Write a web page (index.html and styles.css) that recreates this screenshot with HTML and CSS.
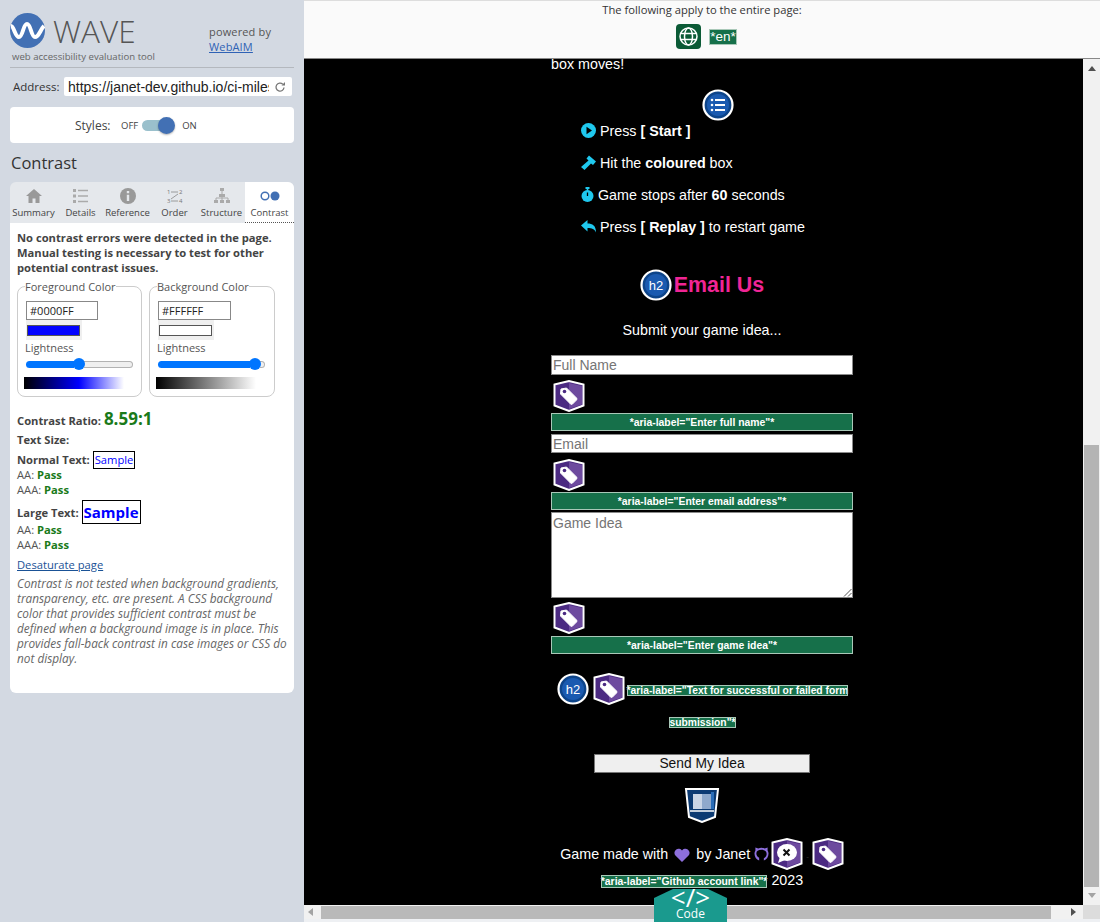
FILE: index.html
```html
<!DOCTYPE html>
<html lang="en">
<head>
  <meta charset="UTF-8">
  <title>WAVE Report</title>
  <link rel="stylesheet" href="styles.css">
</head>
<body>
  <svg class="defs" width="0" height="0">
    <symbol id="shield" viewBox="0 0 32 32">
      <path d="M1.500 4.500 16 1l14.500 3.500v21L16 31 1.500 25.500z" fill="#4b2a82" stroke="#fff" stroke-width="2"/>
      <path d="M16 3l13 3v18.500L16 29z" fill="#6d4a9e"/>
    </symbol>
    <symbol id="tag" viewBox="0 0 32 32">
      <use href="#shield"/>
      <path d="M8 9 13.500 8l10 10q1 1 0 2l-4 4q-1 1-2 0l-10-10z" fill="#fff" stroke="#fff" stroke-linejoin="round"/>
      <circle cx="11.500" cy="11.500" r="1.800" fill="#4b2a82"/>
    </symbol>
    <symbol id="h2" viewBox="0 0 32 32">
      <circle cx="16" cy="16" r="14.500" fill="#0d4489" stroke="#fff" stroke-width="2.200"/>
      <circle cx="16" cy="16" r="11" fill="#1a5ab0"/>
    </symbol>
  </svg>

  <aside class="sidebar">
    <div class="brand">
      <div class="logo-block">
        <div class="logo-row">
          <svg class="logo" width="35" height="35" viewBox="0 0 35 35">
            <circle cx="17.500" cy="17.500" r="17.500" fill="#4270b4"/>
            <path d="M1 13c3 0 4 11 8 11s4-13 8-13 4 13 8 13 5-7 9-11" fill="none" stroke="#fff" stroke-width="4"/>
          </svg>
          <span class="wordmark">WAVE</span>
        </div>
        <div class="tagline">web accessibility evaluation tool</div>
      </div>
      <div class="powered">powered by<br><a href="#">WebAIM</a></div>
    </div>

    <div class="address">
      <label>Address:</label>
      <div class="url">
        <span class="url-text">https://janet-dev.github.io/ci-milestone2</span>
        <svg width="12" height="12" viewBox="0 0 12 12"><path d="M10 6.500A4 4 0 1 1 8.800 3.200" fill="none" stroke="#777" stroke-width="1.300"/><path d="M7.500 4.500h3.500V1z" fill="#777"/></svg>
      </div>
    </div>

    <div class="styles-card">
      <span class="styles-label">Styles:</span>
      <span class="small">OFF</span>
      <span class="toggle"><span class="knob"></span></span>
      <span class="small">ON</span>
    </div>

    <h2 class="panel-title">Contrast</h2>

    <div class="tabs">
      <div class="tab">
        <svg width="18" height="16" viewBox="0 0 18 16"><path d="M9 1 1 8h2.500v7h4v-4.500h3V15h4V8H17z" fill="#999"/></svg>
        <span>Summary</span>
      </div>
      <div class="tab">
        <svg width="16" height="16" viewBox="0 0 16 16"><path d="M5 2.500h10M5 8h10M5 13.500h10" stroke="#aaa" stroke-width="1.500"/><path d="M0 1h3v3H0zM0 6.500h3v3H0zM0 12h3v3H0z" fill="#aaa"/></svg>
        <span>Details</span>
      </div>
      <div class="tab">
        <svg width="16" height="16" viewBox="0 0 16 16"><circle cx="8" cy="8" r="8" fill="#999"/><path d="M6.800 3h2.400v2.300H6.800zM6.800 6.800h2.400V13H6.800z" fill="#e5e8ec"/></svg>
        <span>Reference</span>
      </div>
      <div class="tab">
        <svg width="16" height="16" viewBox="0 0 16 16" class="order-icon"><text x="0" y="6" font-size="6">1</text><text x="12" y="6" font-size="6">2</text><text x="0" y="15" font-size="6">3</text><text x="12" y="15" font-size="6">4</text><path d="M4 4h7M11 6 4 11M4 13h7" stroke="#888" fill="none" stroke-width=".8"/></svg>
        <span>Order</span>
      </div>
      <div class="tab">
        <svg width="18" height="16" viewBox="0 0 18 16"><path d="M7 0h4v3H7zM6 6h6v3H6zM1 12h4v3H1zM7 12h4v3H7zM13 12h4v3h-4z" fill="#aaa"/><path d="M9 3v9M3 12v-2h12v2" fill="none" stroke="#aaa"/></svg>
        <span>Structure</span>
      </div>
      <div class="tab active">
        <svg width="20" height="16" viewBox="0 0 20 16"><circle cx="5" cy="8" r="3.800" fill="none" stroke="#4270b4" stroke-width="1.500"/><circle cx="15" cy="8" r="4.500" fill="#4270b4"/></svg>
        <span>Contrast</span>
      </div>
    </div>

    <div class="panel">
      <p class="lead">No contrast errors were detected in the page. Manual testing is necessary to test for other potential contrast issues.</p>

      <div class="pickers">
        <fieldset class="picker">
          <legend>Foreground Color</legend>
          <div class="hex">#0000FF</div>
          <div class="swatch"><span class="chip chip-blue"></span></div>
          <div class="light-label">Lightness</div>
          <div class="slider"><span class="fill fill-half"></span><span class="thumb"></span><span class="rest"></span></div>
          <div class="ramp ramp-blue"></div>
        </fieldset>
        <fieldset class="picker">
          <legend>Background Color</legend>
          <div class="hex">#FFFFFF</div>
          <div class="swatch"><span class="chip"></span></div>
          <div class="light-label">Lightness</div>
          <div class="slider"><span class="fill fill-full"></span><span class="thumb"></span><span class="rest"></span></div>
          <div class="ramp ramp-grey"></div>
        </fieldset>
      </div>

      <p class="ratio"><b>Contrast Ratio:</b> <span class="ratio-num">8.59:1</span></p>
      <p class="size-head"><b>Text Size:</b></p>
      <p class="normal-row"><b>Normal Text:</b> <span class="sample">Sample</span></p>
      <p class="result">AA: <b>Pass</b></p>
      <p class="result">AAA: <b>Pass</b></p>
      <p class="large-row"><b>Large Text:</b> <span class="sample sample-lg">Sample</span></p>
      <p class="result">AA: <b>Pass</b></p>
      <p class="result">AAA: <b>Pass</b></p>
      <p class="desat"><a href="#">Desaturate page</a></p>
      <p class="note">Contrast is not tested when background gradients, transparency, etc. are present. A CSS background color that provides sufficient contrast must be defined when a background image is in place. This provides fall-back contrast in case images or CSS do not display.</p>
    </div>
  </aside>

  <main class="report">
    <div class="topbar">
      <div class="topbar-text">The following apply to the entire page:</div>
      <div class="topbar-items">
        <span class="globe">
          <svg width="19" height="19" viewBox="0 0 19 19" fill="none" stroke="#fff" stroke-width="1.500"><circle cx="9.500" cy="9.500" r="8.500"/><ellipse cx="9.500" cy="9.500" rx="4" ry="8.500"/><path d="M1.500 6.500h16M1.500 12.500h16"/></svg>
        </span>
        <span class="mark mark-en">*en*</span>
      </div>
    </div>

    <div class="viewport">
      <div class="page">
        <p class="intro">box moves!</p>
        <div class="list-icon">
          <svg width="32" height="32" viewBox="0 0 32 32"><use href="#h2"/><path d="M13 11h10M13 16h10M13 21h10" stroke="#fff" stroke-width="2"/><circle cx="10" cy="11" r="1.300" fill="#fff"/><circle cx="10" cy="16" r="1.300" fill="#fff"/><circle cx="10" cy="21" r="1.300" fill="#fff"/></svg>
        </div>
        <ul class="steps">
          <li>
            <svg width="15" height="15" viewBox="0 0 15 15"><circle cx="7.500" cy="7.500" r="7.500" fill="#1fc8ee"/><path d="M5.500 3.800 11 7.500l-5.500 3.700z" fill="#000"/></svg>
            Press <b>[ Start ]</b>
          </li>
          <li>
            <svg width="15" height="15" viewBox="0 0 15 15"><path d="M8 .5 15 6.500 12 10 10 8.500 3.500 15 0 12 7.500 5.500 5.500 3.500z" fill="#1fc8ee"/></svg>
            Hit the <b>coloured</b> box
          </li>
          <li>
            <svg width="13" height="15" viewBox="0 0 13 15"><circle cx="6.500" cy="9" r="6" fill="#1fc8ee"/><path d="M4.500 0h4v2h-4zM5.700 2h1.600v2H5.700z" fill="#1fc8ee"/><path d="M6.500 5.500V9" stroke="#000" stroke-width="1.300"/></svg>
            Game stops after <b>60</b> seconds
          </li>
          <li>
            <svg width="15" height="15" viewBox="0 0 15 15"><path d="M6.500 1v3.500c5 0 8.500 2 8.500 9-1.500-3.500-4-4.500-8.500-4.500v3.500L0 6.500z" fill="#1fc8ee"/></svg>
            Press <b>[ Replay ]</b> to restart game
          </li>
        </ul>

        <h2 class="email-head">
          <svg width="32" height="32" viewBox="0 0 32 32"><use href="#h2"/><text x="16" y="21" class="h2-text">h2</text></svg>
          <span>Email Us</span>
        </h2>
        <p class="submit">Submit your game idea...</p>

        <form class="idea-form">
          <div class="field field-name">Full Name</div>
          <svg class="tag tag-a" width="32" height="32"><use href="#tag"/></svg>
          <div class="mark-bar">*aria-label="Enter full name"*</div>
          <div class="field field-email">Email</div>
          <svg class="tag tag-b" width="32" height="32"><use href="#tag"/></svg>
          <div class="mark-bar">*aria-label="Enter email address"*</div>
          <div class="field field-area">Game Idea
            <svg class="grip" width="9" height="9" viewBox="0 0 9 9"><path d="M8.500 1 1 8.500M8.500 5 5 8.500" stroke="#555"/></svg>
          </div>
          <svg class="tag tag-c" width="32" height="32"><use href="#tag"/></svg>
          <div class="mark-bar mark-bar-last">*aria-label="Enter game idea"*</div>

          <p class="status">
            <svg width="32" height="32" viewBox="0 0 32 32"><use href="#h2"/><text x="16" y="21" class="h2-text">h2</text></svg>
            <svg class="status-tag" width="32" height="32"><use href="#tag"/></svg>
            <span class="mark">*aria-label="Text for successful or failed form submission"*</span>
          </p>

          <div class="send">Send My Idea</div>

          <div class="shield-row">
            <svg width="36" height="36" viewBox="0 0 36 36">
              <path d="M2 2h32l-3 28-13 5-13-5z" fill="#0b3a73" stroke="#fff" stroke-width="2"/>
              <path d="M9 7h18v15H9z" fill="#c9d5e6"/><path d="M18 7h9v15h-9z" fill="#8fa9cc"/><path d="M6 24h24" stroke="#fff" stroke-width="1.500"/>
              <path d="M27 5h3v17h-3z" fill="#2a6db8"/>
            </svg>
          </div>
        </form>

        <footer class="credits">
          <div class="credit-line">Game made with
            <svg class="heart" width="16" height="14" viewBox="0 0 16 14"><path d="M8 14 1.200 7.200A4 4 0 0 1 8 2.500a4 4 0 0 1 6.800 4.700z" fill="#8d6fdc"/></svg>
            by Janet
            <svg class="octo" width="15" height="15" viewBox="0 0 16 16"><path d="M5.500 15.500C2.500 14.500.5 11.500.5 8c0-1.300.4-2.400 1-3.300V1.500l3 1.200a9 9 0 0 1 7 0l3-1.200v3.200c.6.900 1 2 1 3.300 0 3.500-2 6.500-5 7.500v-2.500c1.800-.6 3-2.500 3-4.500 0-2.700-2-4.500-5.500-4.500S2.500 5.300 2.500 8c0 2 1.200 3.900 3 4.500z" fill="#8d6fdc"/></svg>
            <svg class="bubble" width="32" height="32" viewBox="0 0 32 32"><use href="#shield"/><ellipse cx="16" cy="14.500" rx="10" ry="8.500" fill="#fff"/><path d="M9 19l-2 6 7-3z" fill="#fff"/><path d="M12.500 11.500l6 6M18.500 11.500l-6 6" stroke="#111" stroke-width="2"/></svg>
            <span class="dash">-</span>
            <svg class="label-tag" width="32" height="32"><use href="#tag"/></svg>
          </div>
          <div class="credit-line2"><span class="mark mark-foot">*aria-label="Github account link"*</span> 2023</div>
        </footer>
      </div>
      <div class="vbar">
        <span class="arrow-up"></span>
        <span class="vthumb"></span>
        <span class="arrow-down"></span>
      </div>
    </div>

    <div class="hbar">
      <span class="arrow-left"></span>
      <span class="hthumb"></span>
      <span class="arrow-right"></span>
      <span class="corner"></span>
    </div>
    <div class="bottom-line"></div>

    <div class="code-tab">
      <span class="code-glyph">&lt;/&gt;</span>
      <span class="code-label">Code</span>
    </div>
  </main>
</body>
</html>
```

FILE: styles.css
```css
* { box-sizing: border-box; }
html, body { margin: 0; height: 100%; }
body {
  width: 1100px; height: 922px; overflow: hidden;
  display: flex;
  font-family: "Open Sans", sans-serif;
  background: #d3d9e2;
  color: #444;
}
p { margin: 0; }
.defs { position: absolute; }

/* sidebar */
.sidebar { width: 304px; flex: none; padding: 13px 10px 0; }
.brand { display: flex; height: 55px; border-bottom: 1px solid #b4b8be; }
.logo-block { width: 199px; }
.logo-row { display: flex; align-items: center; height: 35px; }
.logo { flex: none; }
.wordmark { font-size: 31.500px; font-weight: 300; color: #555; margin-left: 8px; line-height: 35px; }
.tagline { font-size: 9.600px; color: #666; margin: 2px 0 0 2px; line-height: 14px; white-space: nowrap; }
.powered { font-size: 11px; line-height: 15px; color: #555; padding-top: 11px; letter-spacing: .15px; }
.powered a { color: #2f62b5; }

.address { display: flex; align-items: center; height: 19px; margin-top: 9px; }
.address label { font-size: 11.500px; color: #333; width: 54px; padding-left: 3px; flex: none; white-space: nowrap; }
.url { width: 228px; height: 19px; background: #fff; border-radius: 2px; display: flex; align-items: center; padding: 0 6px 0 4px; }
.url-text { width: 201px; overflow: hidden; white-space: nowrap; font: 14px "Liberation Sans", sans-serif; color: #222; }
.url svg { margin-left: 5px; flex: none; }

.styles-card { height: 36px; margin-top: 11px; background: #fff; border-radius: 4px; display: flex; align-items: center; padding-left: 65px; }
.styles-label { font-size: 12px; color: #444; width: 46px; }
.small { font-size: 9.500px; color: #444; }
.toggle { width: 32px; height: 11px; margin: 0 8px 0 4px; border-radius: 6px; background: #9ac0cc; position: relative; }
.knob { position: absolute; right: -1px; top: -3px; width: 17px; height: 17px; border-radius: 50%; background: #4270b4; box-shadow: 0 1px 2px rgba(0,0,0,.3); }

.panel-title { font-size: 16.500px; font-weight: 400; color: #333; margin: 9px 0 0 1px; line-height: 22px; height: 30px; }

.tabs { display: flex; height: 41px; background: #e5e8ec; border-radius: 6px 6px 0 0; overflow: hidden; }
.tab { display: flex; flex-direction: column; align-items: center; justify-content: flex-start; padding-top: 6px; width: 47px; font-size: 9.500px; color: #444; white-space: nowrap; }
.tab svg { height: 16px; margin-bottom: 2px; flex: none; }
.tab span { line-height: 14px; }
.tab.active { background: #fff; width: 49px; border-bottom: 1px dotted #555; }
.order-icon text { fill: #777; font-family: "Open Sans", sans-serif; }

.panel { height: 470px; background: #fff; border-radius: 0 0 6px 6px; padding: 7px 7px 0; font-size: 11.200px; line-height: 15px; color: #555; }
.lead { font-weight: 700; color: #444; width: 262px; }
.pickers { display: flex; gap: 7px; margin-top: 6px; }
.picker { width: 125px; height: 116px; margin: 0; padding: 0; border: 1px solid #ccc; border-radius: 8px; position: relative; }
.picker + .picker { width: 126px; }
.picker legend { padding: 0; margin-left: 7px; font-size: 11px; line-height: 11px; color: #555; white-space: nowrap; }
.hex { width: 72px; height: 19px; margin: 9px 0 0 8px; border: 1px solid #888; font-size: 11px; line-height: 17px; padding-left: 3px; color: #222; }
.picker + .picker .hex { width: 73px; }
.swatch { width: 56px; height: 20px; margin-left: 8px; background: #efefef; padding: 5px 2px 4px 1px; }
.chip { display: block; height: 11px; border: 1px solid #555; background: #fff; }
.chip-blue { background: #0000ff; }
.light-label { margin: 0 0 0 7px; line-height: 15px; font-size: 11px; color: #555; }
.slider { display: flex; align-items: center; height: 14px; margin: 2px 0 0 8px; width: 107px; }
.fill { height: 7px; background: #0075ff; border-radius: 4px 0 0 4px; flex: none; }
.fill-half { width: 48px; }
.fill-full { width: 92px; }
.thumb { width: 12px; height: 12px; border-radius: 50%; background: #0075ff; margin: 0 -1px; flex: none; position: relative; }
.rest { flex: 1; height: 7px; background: #efefef; border: 1px solid #b2b2b2; border-left: 0; border-radius: 0 4px 4px 0; }
.ramp { width: 100px; height: 12px; margin: 6px 0 0 6px; }
.ramp-blue { background: linear-gradient(90deg, #000 0, #0000ff 55%, #fff 100%); }
.ramp-grey { background: linear-gradient(90deg, #000, #fff); }

.ratio { margin-top: 11px; line-height: 22px; color: #444; }
.ratio-num { font-size: 17px; font-weight: 700; color: #1a7a1a; }
.size-head { margin-top: 0; line-height: 15px; color: #444; }
.normal-row { margin-top: 3px; line-height: 19px; height: 17px; color: #444; }
.sample { display: inline-block; height: 18px; line-height: 16px; padding: 0 1px; border: 1px solid #000; color: #0000ff; background: #fff; }
.result { line-height: 15px; }
.result b { color: #1a7a1a; }
.large-row { margin-top: 3px; height: 25px; line-height: 25px; color: #444; }
.sample-lg { height: 24px; line-height: 22px; font-size: 15px; font-weight: 700; vertical-align: top; padding: 0 1px; }
.large-row + .result { margin-top: -3px; }
.desat { margin-top: 5px; line-height: 15px; }
.desat a { color: #1a5296; }
.note { margin-top: 4px; font-size: 11.800px; font-style: italic; color: #666; width: 272px; }

/* report side */
.report { flex: 1; position: relative; display: flex; flex-direction: column; background: #000; }
.topbar { height: 59px; flex: none; background: #fafafa; border-top: 1px solid #ddd; border-bottom: 1px solid #888; text-align: center; }
.topbar-text { font-size: 11.200px; line-height: 15px; color: #333; padding-top: 1px; }
.topbar-items { display: flex; justify-content: center; align-items: center; gap: 8px; margin-top: 7px; padding-left: 9px; }
.globe { width: 25px; height: 25px; background: #0b5a36; border-radius: 4px; display: flex; align-items: center; justify-content: center; }
.mark { background: #16704a; color: #fff; font: 700 10.400px "Liberation Sans", sans-serif; outline: 1px solid #a9c8b8; outline-offset: -1px; }
.mark-en { font: 400 13.500px "Liberation Sans", sans-serif; padding: 0 1px; line-height: 16px; }

.viewport { flex: 1; display: flex; min-height: 0; }
.page { flex: 1; overflow: hidden; padding-left: 247px; color: #fff; font: 14.300px "Liberation Sans", sans-serif; background: #000; }
.intro { line-height: 10px; }
.list-icon { width: 302px; height: 32px; margin-top: 20px; text-align: center; padding-left: 32px; }
.steps { list-style: none; margin: -1px 0 0; padding: 0 0 0 30px; }
.steps li { height: 22px; line-height: 22px; margin-bottom: 10px; white-space: nowrap; }
.steps svg { vertical-align: -2px; }

.email-head { display: flex; width: 302px; height: 32px; margin: 31px 0 0; justify-content: center; align-items: center; gap: 2px; font-size: 21.400px; color: #f02595; }
.h2-text { font: 13px "Liberation Sans", sans-serif; fill: #fff; text-anchor: middle; }
.submit { width: 302px; text-align: center; line-height: 20px; margin-top: 19px; }

.idea-form { width: 302px; margin-top: 15px; }
.field { background: #fff; border: 1px solid #8a8a8a; color: #757575; padding-left: 1px; height: 20px; line-height: 18px; font-size: 14px; }
.field-email { height: 19px; margin-top: 3px; line-height: 18px; }
.field-area { height: 86px; margin-top: 2px; position: relative; line-height: 20px; }
.grip { position: absolute; right: 0; bottom: 0; }
.tag { display: block; margin-left: 2px; }
.tag-a { margin-top: 5px; }
.tag-b { margin-top: 6px; }
.tag-c { margin-top: 4px; }
.mark-bar { height: 18px; line-height: 17px; margin-top: 1px; background: #16704a; border: 1px solid #a9c8b8; color: #fff; font-size: 10.400px; font-weight: 700; text-align: center; }
.mark-bar-last { margin-top: 2px; }
.status { margin-top: 19px; height: 65px; line-height: 32px; text-align: center; padding-left: 1px; }
.status svg { vertical-align: top; }
.status-tag { margin-right: -2px; }
.status .mark { font-size: 10.300px; }
.send { width: 216px; height: 19px; margin: 16px 0 0 43px; background: #efefef; border: 1px solid #767676; color: #111; text-align: center; line-height: 17px; font-size: 13.800px; }
.shield-row { height: 36px; margin-top: 14px; text-align: center; }

.credits { width: 302px; text-align: center; }
.credit-line { height: 31px; line-height: 31px; margin-top: 16px; white-space: nowrap; }
.credit-line svg { vertical-align: middle; }
.heart { margin: 0 2px; }
.octo { margin: 0 -2px 3px 0; }
.bubble { margin-top: -2px; }
.label-tag { margin-top: -2px; }
.dash { color: #333; font-size: 8px; margin: 0 -1px; }
.credit-line2 { line-height: 20px; white-space: nowrap; }
.mark-foot { padding: 1px 0; }

/* scrollbars */
.vbar { width: 17px; flex: none; background: #f1f1f1; position: relative; display: flex; flex-direction: column; align-items: center; }
.vthumb { width: 15px; height: 442px; background: #b4b4b4; margin-top: 374px; }
.arrow-up { width: 0; height: 0; border: 4px solid transparent; border-top: 0; border-bottom: 5px solid #505050; margin-top: 7px; }
.arrow-down { width: 0; height: 0; border: 4px solid transparent; border-bottom: 0; border-top: 5px solid #a3a3a3; margin-top: 6px; }
.hbar { height: 14px; flex: none; background: #f1f1f1; display: flex; align-items: center; }
.arrow-left { width: 0; height: 0; border: 4px solid transparent; border-left: 0; border-right: 5px solid #a3a3a3; margin-left: 4px; }
.hthumb { width: 730px; height: 13px; margin-left: 8px; background: #b9b9b9; }
.arrow-right { width: 0; height: 0; border: 4px solid transparent; border-right: 0; border-left: 5px solid #505050; margin-left: 20px; }
.corner { width: 17px; height: 14px; background: #dcdcdc; margin-left: auto; }
.bottom-line { height: 3px; flex: none; background: #eef0f3; }

.code-tab {
  position: absolute; left: 350px; bottom: 0; width: 73px; height: 33px;
  background: #1a9a8e; color: #fff; text-align: center;
  clip-path: polygon(0 9px, 26% 0, 74% 0, 100% 9px, 100% 100%, 0 100%);
  display: flex; flex-direction: column; align-items: center;
}
.code-glyph { font: 400 26px/17px "Open Sans", sans-serif; height: 17px; }
.code-label { font-size: 12px; line-height: 15px; }
```
